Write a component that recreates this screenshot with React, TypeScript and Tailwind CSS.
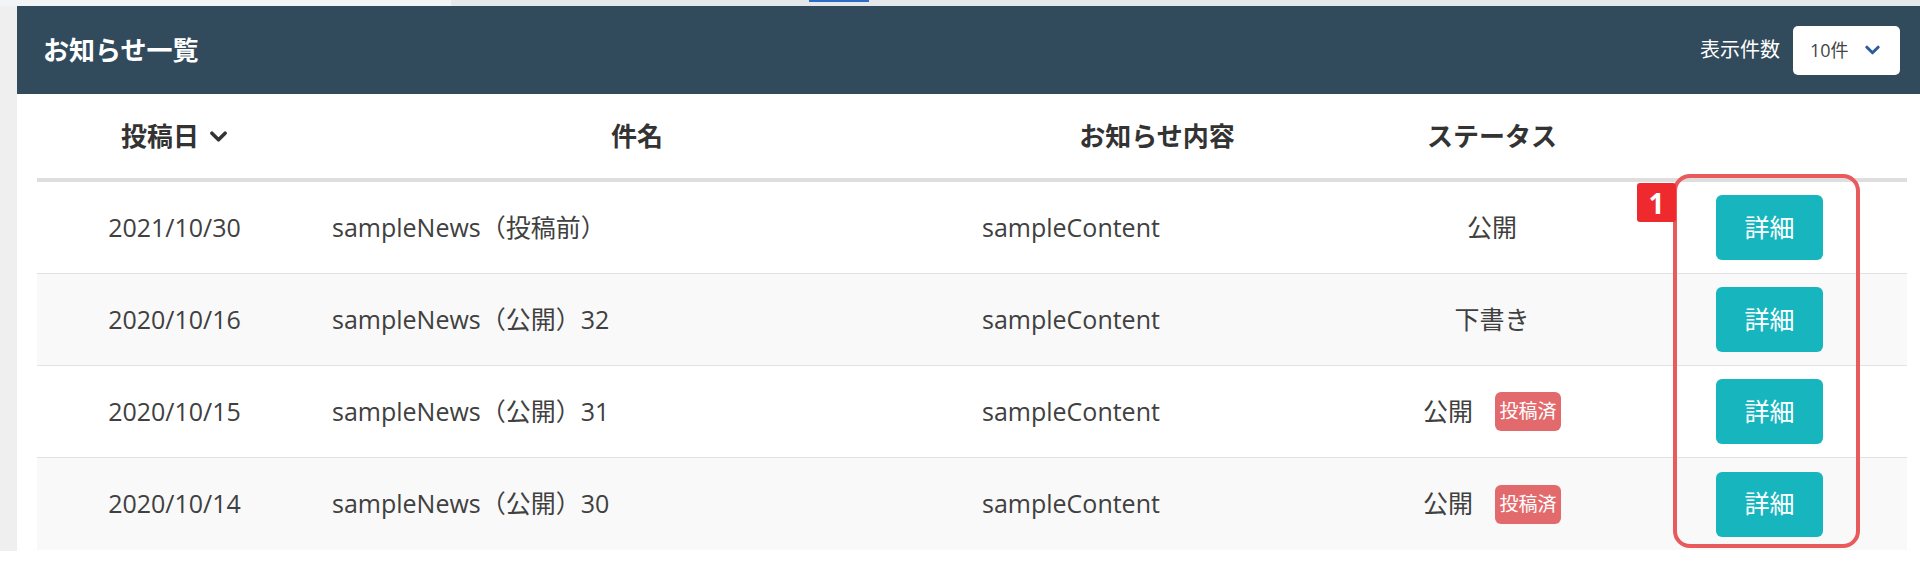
import React from 'react';

type NewsRow = {
  date: string;
  title: string;
  content: string;
  status: string;
  posted: boolean;
};

const rows: NewsRow[] = [
  { date: '2021/10/30', title: 'sampleNews（投稿前）', content: 'sampleContent', status: '公開', posted: false },
  { date: '2020/10/16', title: 'sampleNews（公開）32', content: 'sampleContent', status: '下書き', posted: false },
  { date: '2020/10/15', title: 'sampleNews（公開）31', content: 'sampleContent', status: '公開', posted: true },
  { date: '2020/10/14', title: 'sampleNews（公開）30', content: 'sampleContent', status: '公開', posted: true },
];

const Chevron: React.FC<{ className?: string }> = ({ className }) => (
  <svg viewBox="0 0 16 10" className={className} fill="none" stroke="currentColor" strokeWidth="3.2" strokeLinecap="round" strokeLinejoin="round">
    <polyline points="2,2 8,8 14,2" />
  </svg>
);

export default function App() {
  return (
    <div className="relative h-[566px] w-[1920px] overflow-hidden bg-white font-['Open_Sans','Noto_Sans_CJK_JP',sans-serif] text-[#404040]">
      <div className="flex h-[551px] flex-col bg-[#efefef]">

        {/* strip of the page above */}
        <div className="flex h-[6px]">
          <div className="w-[451px] bg-[#f3f4f6]" />
          <div className="flex-1 bg-[#e6e7eb]">
            <div className="ml-[358px] h-[2px] w-[60px] bg-[#2b6cc4]" />
          </div>
        </div>

        <section className="ml-[17px] flex flex-1 flex-col bg-white">
          <header className="flex h-[88px] items-center justify-between bg-[#314b5d] pl-[26px] pr-[20px]">
            <h1 className="text-[26px] font-bold text-white">お知らせ一覧</h1>
            <div className="flex items-center gap-[13px]">
              <span className="text-[20px] text-white">表示件数</span>
              <div className="flex h-[49px] w-[107px] items-center justify-between rounded-[5px] bg-white pl-[17px] pr-[20px]">
                <span className="text-[18px] text-[#444]">10件</span>
                <Chevron className="h-[10px] w-[15px] text-[#2a5d9c]" />
              </div>
            </div>
          </header>

          <div className="ml-[20px] w-[1870px]">
            <div className="flex h-[88px] items-center border-b-4 border-[#dedede] text-[26px] font-bold text-[#333]">
              <div className="flex w-[275px] items-center justify-center gap-[10px]">
                投稿日
                <Chevron className="h-[11px] w-[19px] text-[#333]" />
              </div>
              <div className="w-[650px] text-center">件名</div>
              <div className="w-[390px] text-center">お知らせ内容</div>
              <div className="w-[280px] text-center">ステータス</div>
              <div className="w-[275px]" />
            </div>

            {rows.map((row, i) => (
              <div
                key={row.date}
                className={`flex h-[92px] items-center text-[25px] ${i < rows.length - 1 ? 'border-b border-[#e2e2e2]' : ''} ${i % 2 === 1 ? 'bg-[#f9f9f9]' : 'bg-white'}`}
              >
                <div className="w-[275px] text-center">{row.date}</div>
                <div className="w-[650px] pl-[20px]">{row.title}</div>
                <div className="w-[390px] pl-[20px]">{row.content}</div>
                <div className="flex w-[280px] items-center justify-center gap-[22px]">
                  <span>{row.status}</span>
                  {row.posted && (
                    <span className="flex h-[39px] w-[66px] items-center justify-center rounded-[6px] bg-[#e26a6c] text-[19px] text-white">
                      投稿済
                    </span>
                  )}
                </div>
                <div className="flex w-[275px] justify-center">
                  <button type="button" className="h-[65px] w-[107px] rounded-[6px] bg-[#17b6bf] text-[25px] text-white">
                    詳細
                  </button>
                </div>
              </div>
            ))}
          </div>
        </section>
      </div>

      {/* annotation overlay */}
      <div className="absolute left-[1673px] top-[174px] h-[374px] w-[187px] rounded-[17px] border-4 border-[#e85a5c]" />
      <div className="absolute left-[1637px] top-[183px] flex h-[39px] w-[39px] items-center justify-center rounded-[3px] bg-[#ee2a2e] text-[28px] font-bold leading-none text-white">
        1
      </div>
    </div>
  );
}
